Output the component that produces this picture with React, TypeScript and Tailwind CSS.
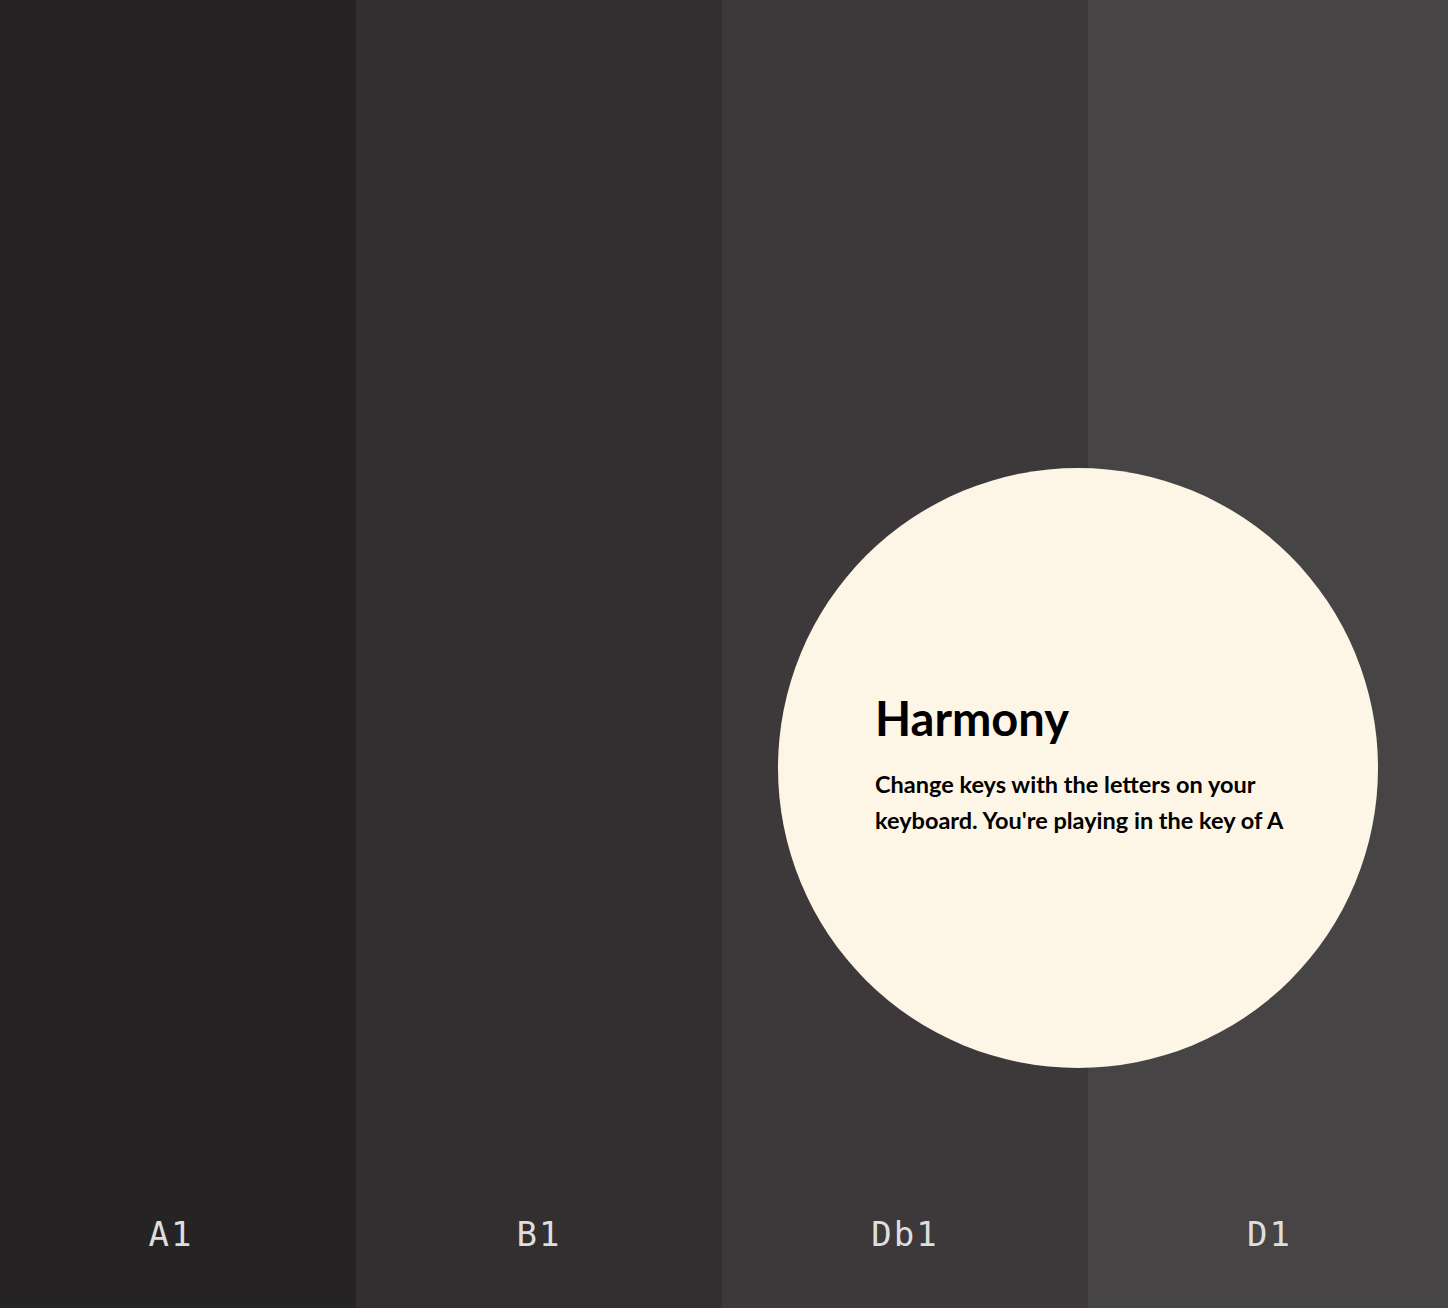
import React from "react";

const cols = [
  { label: "A1", cls: "w-[356px] bg-[#262324] pr-[14px]" },
  { label: "B1", cls: "w-[366px] bg-[#332f30]" },
  { label: "Db1", cls: "w-[366px] bg-[#3d393a]" },
  { label: "D1", cls: "flex-1 bg-[#464445] pl-[3px]" },
];

export default function App() {
  return (
    <div className="relative h-[1308px] w-[1448px] overflow-hidden">
      <div className="flex h-full w-full">
        {cols.map((c) => (
          <div key={c.label} className={`${c.cls} flex flex-col justify-end items-center pb-[57px]`}>
            <span className="text-[34px] leading-none tracking-[2px] text-[#dedede] [font-family:'DejaVu_Sans_Mono',monospace]">
              {c.label}
            </span>
          </div>
        ))}
      </div>
      <div className="absolute left-[778px] top-[468px] flex h-[600px] w-[600px] flex-col rounded-full bg-[#fdf5e6] pl-[97px] pr-[60px] pt-[221px] text-black [font-family:Lato,sans-serif]">
        <h1 className="text-[47px] font-bold leading-[1.25]">Harmony</h1>
        <p className="mt-[18px] text-[23.5px] font-bold leading-[36px]">
          Change keys with the letters on your keyboard. You're playing in the key of A
        </p>
      </div>
    </div>
  );
}
